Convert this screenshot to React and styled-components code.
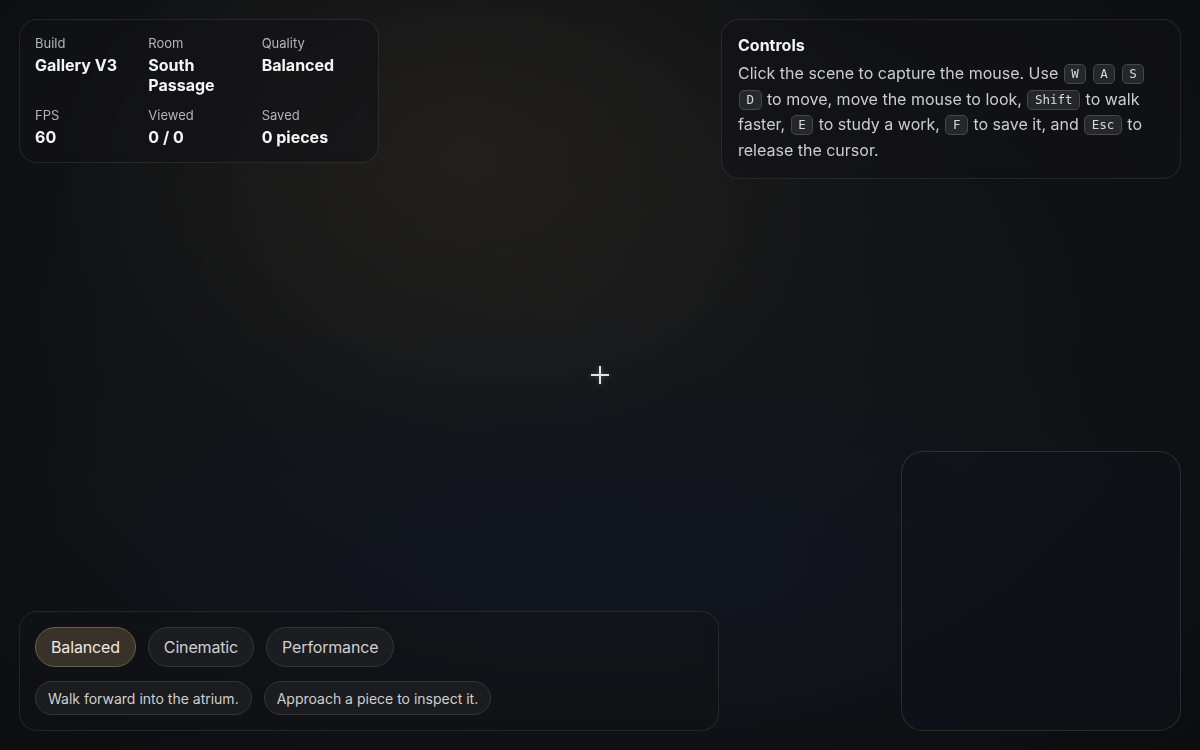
import React from "react";
import styled, { createGlobalStyle } from "styled-components";

const Global = createGlobalStyle`
  html, body { margin: 0; padding: 0; background: #0b0c0e; }
  body { font-family: Inter, "Noto Sans", sans-serif; -webkit-font-smoothing: antialiased; }
  * { box-sizing: border-box; }
`;

const Stage = styled.div`
  position: relative;
  width: 1200px;
  height: 750px;
  overflow: hidden;
  background:
    radial-gradient(ellipse 420px 300px at 470px 160px, rgba(38,36,32,0.75), rgba(38,36,32,0) 100%),
    radial-gradient(ellipse 700px 260px at 600px 560px, rgba(16,21,32,0.9), rgba(16,21,32,0) 100%),
    radial-gradient(ellipse 900px 600px at 560px 320px, #17181a, #0c0d0f 100%);
`;

const Panel = styled.div`
  position: absolute;
  background: rgba(18, 19, 21, 0.55);
  border: 1px solid rgba(255, 255, 255, 0.09);
  border-radius: 18px;
  color: #f2f2f2;
  backdrop-filter: blur(6px);
`;

const StatsPanel = styled(Panel)`
  top: 19px;
  left: 19px;
  width: 360px;
  padding: 15px;
  display: grid;
  grid-template-columns: repeat(3, 1fr);
  column-gap: 12px;
  row-gap: 12px;
`;

const Stat = styled.div`
  display: flex;
  flex-direction: column;
  gap: 4px;
`;

const StatLabel = styled.div`
  font-size: 13px;
  line-height: 16px;
  color: #b4b4b4;
`;

const StatValue = styled.div`
  font-size: 16px;
  line-height: 20px;
  font-weight: 700;
  color: #f5f5f5;
`;

const ControlsPanel = styled(Panel)`
  top: 19px;
  right: 19px;
  width: 460px;
  padding: 15px 16px;
`;

const Title = styled.div`
  font-size: 16px;
  line-height: 20px;
  font-weight: 700;
  color: #f5f5f5;
  margin-bottom: 6px;
`;

const Body = styled.p`
  margin: 0;
  font-size: 16px;
  line-height: 25.5px;
  color: #cdcdcd;
`;

const Kbd = styled.kbd`
  display: inline-block;
  font-family: "DejaVu Sans Mono", "Liberation Mono", monospace;
  font-size: 12.5px;
  line-height: 18px;
  padding: 0 6.5px;
  margin: 0 1px;
  color: #d8d8d8;
  background: #25272a;
  border: 1px solid #45474b;
  border-radius: 5px;
  vertical-align: 1px;
`;

const BottomPanel = styled(Panel)`
  left: 19px;
  bottom: 19px;
  width: 700px;
  padding: 15px;
  display: flex;
  flex-direction: column;
  gap: 14px;
`;

const Row = styled.div`
  display: flex;
  gap: 12px;
`;

const ModeButton = styled.button`
  height: 40px;
  padding: 0 15px;
  border-radius: 20px;
  font-family: Inter, sans-serif;
  font-size: 16px;
  letter-spacing: -0.15px;
  color: ${(p) => (p.$active ? "#efe9e0" : "#cfcfcf")};
  background: ${(p) => (p.$active ? "#38322a" : "#1c1d20")};
  border: 1px solid ${(p) => (p.$active ? "#6a5d4a" : "#34363a")};
  cursor: pointer;
`;

const Chip = styled.div`
  height: 34px;
  display: flex;
  align-items: center;
  padding: 0 12px;
  border-radius: 17px;
  font-size: 14px;
  color: #cfcfcf;
  background: #1b1c1f;
  border: 1px solid #34363a;
`;

const Minimap = styled.div`
  position: absolute;
  right: 19px;
  bottom: 19px;
  width: 280px;
  height: 280px;
  border-radius: 22px;
  border: 1px solid rgba(255, 255, 255, 0.12);
  background: rgba(14, 18, 26, 0.55);
`;

const Crosshair = styled.div`
  position: absolute;
  left: 591px;
  top: 366px;
  width: 18px;
  height: 18px;
  &::before, &::after {
    content: "";
    position: absolute;
    background: #e4e4e4;
    box-shadow: 0 0 4px rgba(255,255,255,0.25);
  }
  &::before { left: 0; top: 8px; width: 18px; height: 2px; }
  &::after { left: 8px; top: 0; width: 2px; height: 18px; }
`;

const stats = [
  ["Build", "Gallery V3"],
  ["Room", "South Passage"],
  ["Quality", "Balanced"],
  ["FPS", "60"],
  ["Viewed", "0 / 0"],
  ["Saved", "0 pieces"],
];

export default function App() {
  return (
    <Stage>
      <Global />
      <StatsPanel>
        {stats.map(([l, v]) => (
          <Stat key={l}>
            <StatLabel>{l}</StatLabel>
            <StatValue>{v}</StatValue>
          </Stat>
        ))}
      </StatsPanel>
      <ControlsPanel>
        <Title>Controls</Title>
        <Body>
          Click the scene to capture the mouse. Use <Kbd>W</Kbd> <Kbd>A</Kbd> <Kbd>S</Kbd>{" "}
          <Kbd>D</Kbd> to move, move the mouse to look, <Kbd>Shift</Kbd> to walk faster,{" "}
          <Kbd>E</Kbd> to study a work, <Kbd>F</Kbd> to save it, and <Kbd>Esc</Kbd> to release the
          cursor.
        </Body>
      </ControlsPanel>
      <Crosshair />
      <BottomPanel>
        <Row>
          <ModeButton $active>Balanced</ModeButton>
          <ModeButton>Cinematic</ModeButton>
          <ModeButton>Performance</ModeButton>
        </Row>
        <Row>
          <Chip>Walk forward into the atrium.</Chip>
          <Chip>Approach a piece to inspect it.</Chip>
        </Row>
      </BottomPanel>
      <Minimap />
    </Stage>
  );
}
